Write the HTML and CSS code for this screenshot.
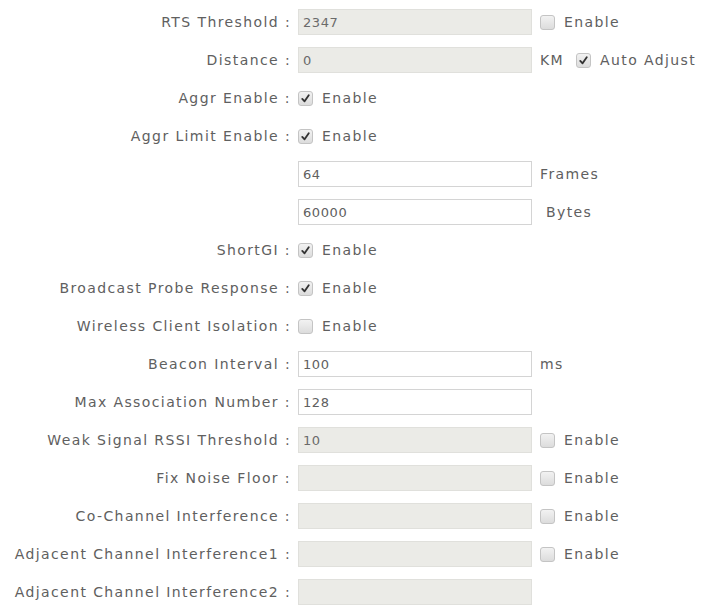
FILE: index.html
```html
<!DOCTYPE html>
<html lang="en">
<head>
  <meta charset="UTF-8" />
  <title>Wireless Advanced Settings</title>
  <link rel="stylesheet" href="styles.css">
</head>
<body>
  <div class="form">
    <div class="row">
      <label class="lbl">RTS Threshold :</label>
      <div class="ctl"><input class="txt off" value="2347" disabled><span class="cb"></span><span class="opt">Enable</span></div>
    </div>
    <div class="row">
      <label class="lbl">Distance :</label>
      <div class="ctl"><input class="txt off" value="0" disabled><span class="unit">KM</span><span class="cb on"><svg viewBox="0 0 14 14"><path d="M3.5 7.5 L6 10 L10.5 3.5" /></svg></span><span class="opt">Auto Adjust</span></div>
    </div>
    <div class="row">
      <label class="lbl">Aggr Enable :</label>
      <div class="ctl"><span class="cb on first"><svg viewBox="0 0 14 14"><path d="M3.5 7.5 L6 10 L10.5 3.5" /></svg></span><span class="opt">Enable</span></div>
    </div>
    <div class="row">
      <label class="lbl">Aggr Limit Enable :</label>
      <div class="ctl"><span class="cb on first"><svg viewBox="0 0 14 14"><path d="M3.5 7.5 L6 10 L10.5 3.5" /></svg></span><span class="opt">Enable</span></div>
    </div>
    <div class="row">
      <label class="lbl"></label>
      <div class="ctl"><input class="txt" value="64"><span class="unit">Frames</span></div>
    </div>
    <div class="row">
      <label class="lbl"></label>
      <div class="ctl"><input class="txt" value="60000"><span class="unit bytes">Bytes</span></div>
    </div>
    <div class="row">
      <label class="lbl">ShortGI :</label>
      <div class="ctl"><span class="cb on first"><svg viewBox="0 0 14 14"><path d="M3.5 7.5 L6 10 L10.5 3.5" /></svg></span><span class="opt">Enable</span></div>
    </div>
    <div class="row">
      <label class="lbl">Broadcast Probe Response :</label>
      <div class="ctl"><span class="cb on first"><svg viewBox="0 0 14 14"><path d="M3.5 7.5 L6 10 L10.5 3.5" /></svg></span><span class="opt">Enable</span></div>
    </div>
    <div class="row">
      <label class="lbl">Wireless Client Isolation :</label>
      <div class="ctl"><span class="cb first"></span><span class="opt">Enable</span></div>
    </div>
    <div class="row">
      <label class="lbl">Beacon Interval :</label>
      <div class="ctl"><input class="txt" value="100"><span class="unit">ms</span></div>
    </div>
    <div class="row">
      <label class="lbl">Max Association Number :</label>
      <div class="ctl"><input class="txt" value="128"></div>
    </div>
    <div class="row">
      <label class="lbl">Weak Signal RSSI Threshold :</label>
      <div class="ctl"><input class="txt off" value="10" disabled><span class="cb"></span><span class="opt">Enable</span></div>
    </div>
    <div class="row">
      <label class="lbl">Fix Noise Floor :</label>
      <div class="ctl"><input class="txt off" value="" disabled><span class="cb"></span><span class="opt">Enable</span></div>
    </div>
    <div class="row">
      <label class="lbl">Co-Channel Interference :</label>
      <div class="ctl"><input class="txt off" value="" disabled><span class="cb"></span><span class="opt">Enable</span></div>
    </div>
    <div class="row">
      <label class="lbl">Adjacent Channel Interference1 :</label>
      <div class="ctl"><input class="txt off" value="" disabled><span class="cb"></span><span class="opt">Enable</span></div>
    </div>
    <div class="row">
      <label class="lbl">Adjacent Channel Interference2 :</label>
      <div class="ctl"><input class="txt off" value="" disabled></div>
    </div>
  </div>
</body>
</html>
```

FILE: styles.css
```css
body {
  margin: 0;
  padding: 0;
  background: #fff;
  font-family: 'DejaVu Sans', Verdana, sans-serif;
  font-size: 14px;
  letter-spacing: 1.4px;
  color: #606060;
}

.form {
  padding-top: 3px;
}

.row {
  display: grid;
  grid-template-columns: 298px 1fr;
  height: 38px;
  align-items: center;
}

.lbl {
  text-align: right;
  padding-right: 7px;
  white-space: nowrap;
}

.ctl {
  display: flex;
  align-items: center;
}

.txt {
  box-sizing: border-box;
  width: 234px;
  height: 26px;
  margin: 0;
  padding: 0 4px;
  border: 1px solid #d4d4d4;
  background: #fff;
  font-family: inherit;
  font-size: 13px;
  letter-spacing: 0.6px;
  color: #606060;
  outline: none;
}

.txt.off {
  background: #ebebe7;
  border-color: #e0e0dc;
  color: #6a6a6a;
}

.cb {
  box-sizing: border-box;
  width: 15px;
  height: 15px;
  margin-left: 8px;
  border: 1px solid #c4c4c4;
  border-radius: 3px;
  background: linear-gradient(#f2f2f2, #dcdcdc);
  display: inline-flex;
}

.cb.first {
  margin-left: 0;
}

.cb svg {
  width: 13px;
  height: 13px;
}

.cb svg path {
  fill: none;
  stroke: #333;
  stroke-width: 2;
  stroke-linecap: round;
  stroke-linejoin: round;
}

.opt {
  margin-left: 9px;
}

.unit {
  margin-left: 8px;
}

.unit + .cb {
  margin-left: 12px;
}

.unit.bytes {
  margin-left: 14px;
}
```
